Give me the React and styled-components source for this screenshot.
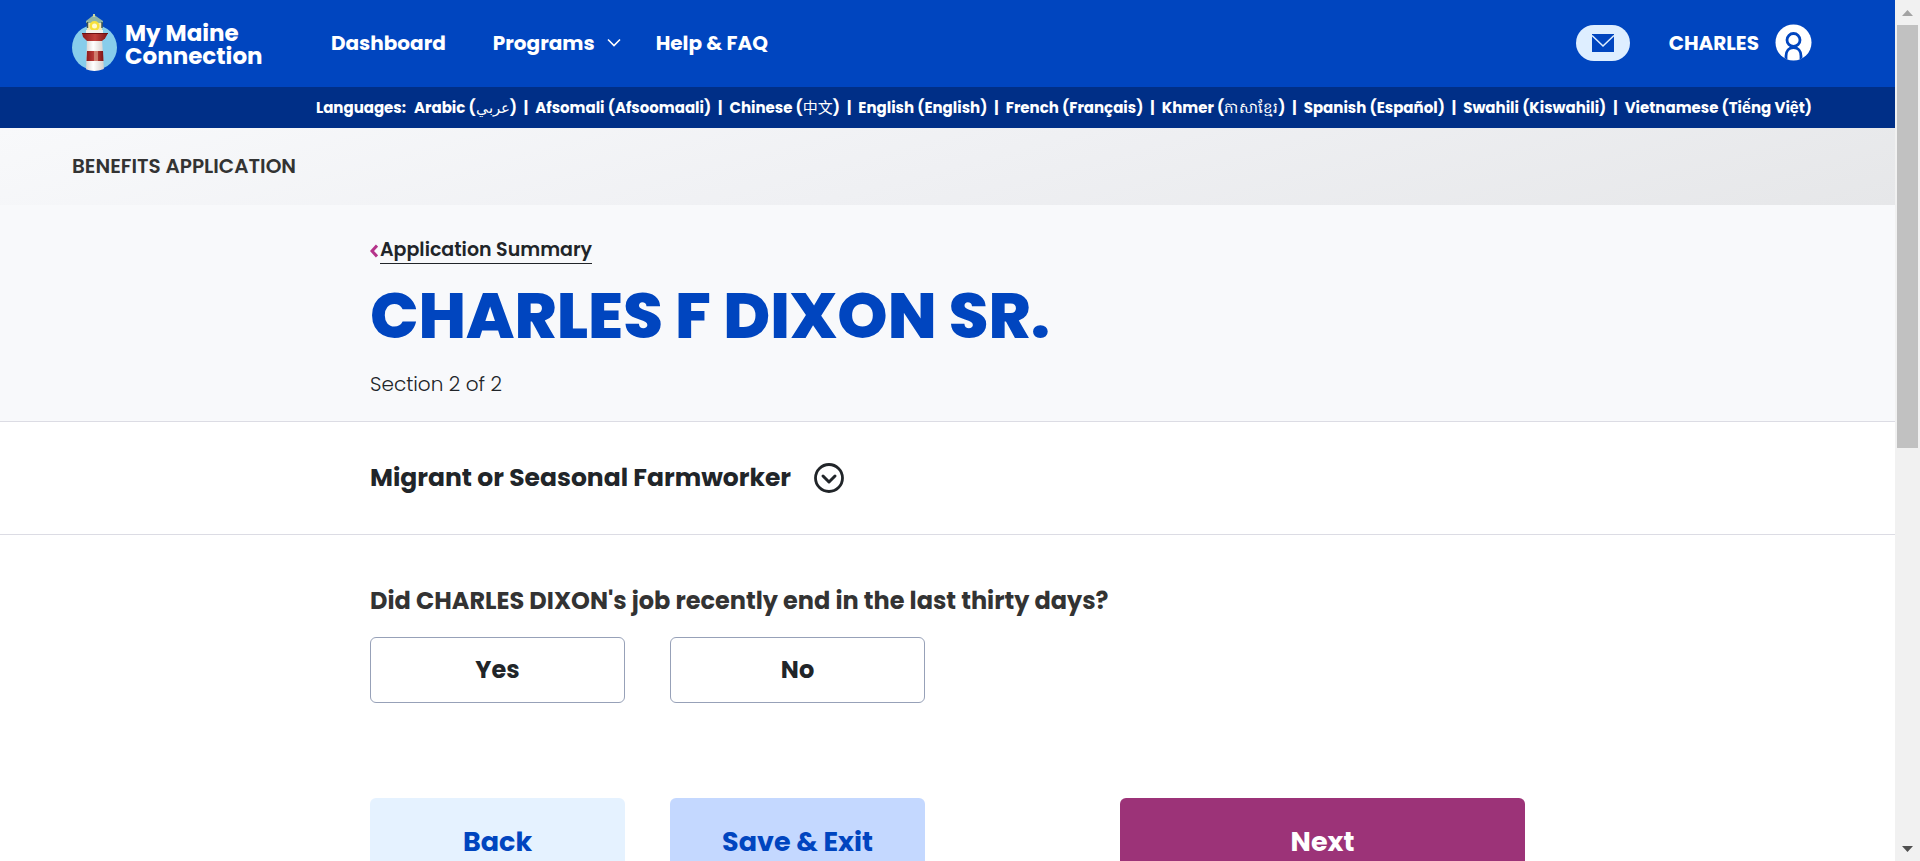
import React, { useState } from "react";
import styled, { createGlobalStyle } from "styled-components";

const GlobalStyle = createGlobalStyle`
  *, *::before, *::after { box-sizing: border-box; }
  html, body { margin: 0; padding: 0; }
  body {
    font-family: Poppins, Inter, "Noto Sans CJK SC", "Noto Sans", sans-serif;
    color: #212529;
    background: #fff;
  }
  button { font-family: inherit; cursor: pointer; }
  h1, h2, h3, p, ul, fieldset { margin: 0; padding: 0; }
`;

const Screen = styled.div`
  display: grid;
  grid-template-columns: minmax(0, 1fr) 25px;
  height: 100vh;
  overflow: hidden;
`;

const Page = styled.div`
  overflow: hidden;
`;

const Header = styled.header`
  display: flex;
  align-items: center;
  height: 87px;
  padding: 0 83px 2px 72px;
  background: #0045bf;
  color: #fff;
`;

const Brand = styled.a`
  display: flex;
  align-items: flex-start;
  gap: 8px;
  width: 259px;
  color: inherit;
  text-decoration: none;
`;

const BrandName = styled.span`
  padding-top: 8px;
  font-size: 23px;
  font-weight: 700;
  line-height: 23px;
`;

const Nav = styled.nav`
  display: flex;
  align-items: center;
  gap: 47px;
  flex: 1;
`;

const navText = `
  display: flex;
  align-items: center;
  padding: 0;
  border: 0;
  background: none;
  color: inherit;
  font-size: 20px;
  font-weight: 700;
  line-height: 28px;
  text-decoration: none;
`;
const NavLink = styled.a`${navText}`;
const NavButton = styled.button`
  ${navText}
  gap: 12px;
  margin-right: -12px;
`;

const MailButton = styled.button`
  display: flex;
  align-items: center;
  justify-content: center;
  width: 54px;
  height: 36px;
  margin-right: 39px;
  padding: 0;
  border: 0;
  border-radius: 18px;
  background: #deeeff;
`;

const Account = styled.button`
  ${navText}
  gap: 16px;
`;

const LanguageBar = styled.div`
  display: flex;
  align-items: center;
  justify-content: flex-end;
  gap: 8px;
  height: 41px;
  padding: 0 83px 0 72px;
  background: #002f87;
  color: #fff;
  font-size: 15px;
  font-weight: 700;
  line-height: 24px;
  white-space: nowrap;
`;

const LanguageList = styled.ul`
  display: flex;
  list-style: none;
`;

const LanguageItem = styled.li`
  & + &::before {
    content: "|";
    padding: 0 7px;
  }
`;

const LanguageLink = styled.a`
  color: inherit;
  text-decoration: none;
`;

const NativeName = styled.span`
  font-weight: ${(p) => (p.$thin ? 400 : 700)};
`;

const AppBar = styled.div`
  display: flex;
  align-items: center;
  height: 77px;
  padding: 0 72px 2px;
  background: linear-gradient(165deg, #f8f9fb 0%, #eff0f3 50%, #e6e7e9 100%);
  color: #333;
  font-size: 20px;
  font-weight: 600;
  line-height: 28px;
`;

const Band = styled.section`
  padding: ${(p) => p.$pad};
  background: ${(p) => (p.$tint ? "#f8f9fb" : "#fff")};
  border-bottom: ${(p) => (p.$line ? "1px solid #dcdce4" : "0")};
`;

const Container = styled.div`
  width: calc(100% - 48px);
  max-width: 1155px;
  margin: 0 auto;
`;

const BackLink = styled.a`
  display: inline-flex;
  align-items: center;
  gap: 2px;
  color: #212529;
  font-size: 19px;
  font-weight: 600;
  line-height: 28px;
  text-decoration: none;
  span { border-bottom: 1px solid #212529; line-height: 26px; }
`;

const Title = styled.h1`
  margin-top: 12px;
  color: #0045bf;
  font-size: 64px;
  font-weight: 800;
  line-height: 77px;
`;

const Progress = styled.p`
  margin-top: 16px;
  font-size: 20px;
  font-weight: 300;
  line-height: 28px;
`;

const SectionRow = styled.div`
  display: flex;
  align-items: center;
  gap: 23px;
`;

const SectionTitle = styled.h2`
  font-size: 25px;
  font-weight: 700;
  line-height: 32px;
`;

const ToggleButton = styled.button`
  display: flex;
  padding: 0;
  border: 0;
  background: none;
  color: #212529;
`;

const Question = styled.fieldset`
  border: 0;
`;

const Legend = styled.legend`
  margin-bottom: 20px;
  padding: 0;
  color: #333;
  font-size: 24px;
  font-weight: 700;
  line-height: 32px;
`;

const ButtonRow = styled.div`
  display: flex;
  gap: 45px;
`;

const Choice = styled.button`
  width: 255px;
  height: 66px;
  border: 1px solid #97a1b8;
  border-radius: 6px;
  background: ${(p) => (p.$on ? "#deeeff" : "#fff")};
  color: #212529;
  font-size: 24px;
  font-weight: 700;
`;

const actionLook = {
  back: { bg: "#e5f2ff", fg: "#0045bf", w: "255px" },
  save: { bg: "#c4d8ff", fg: "#0045bf", w: "255px" },
  next: { bg: "#9c3378", fg: "#fff", w: "405px" },
};
const Action = styled.button`
  width: ${(p) => actionLook[p.$kind].w};
  height: 88px;
  margin-left: ${(p) => (p.$kind === "next" ? "auto" : "0")};
  border: 0;
  border-radius: 6px;
  background: ${(p) => actionLook[p.$kind].bg};
  color: ${(p) => actionLook[p.$kind].fg};
  font-size: 27px;
  font-weight: 700;
`;

const Actions = styled(ButtonRow)`
  margin-top: 95px;
`;

const ScrollBar = styled.div`
  display: flex;
  flex-direction: column;
  justify-content: space-between;
  align-items: center;
  background: #f1f1f1;
`;

const ScrollTop = styled.div`
  display: flex;
  flex-direction: column;
  align-items: center;
  height: 52%;
`;

const ScrollArrow = styled.div`
  display: flex;
  align-items: center;
  justify-content: center;
  width: 25px;
  height: 25px;
  flex: none;
`;

const ScrollThumb = styled.div`
  flex: 1;
  width: 21px;
  background: #c1c1c1;
`;

function Lighthouse() {
  return (
    <svg width="45" height="57" viewBox="0 0 45 57" aria-hidden="true">
      <defs>
        <clipPath id="disc"><path d="M0 0H45V35A22.500 22 0 0 1 0 35Z" /></clipPath>
        <linearGradient id="tower">
          <stop offset="0" stopColor="#d8d4d0" /><stop offset=".4" stopColor="#fff" /><stop offset="1" stopColor="#d5cfca" />
        </linearGradient>
        <linearGradient id="red">
          <stop offset="0" stopColor="#8d1a1c" /><stop offset=".5" stopColor="#c2413c" /><stop offset="1" stopColor="#7d1416" />
        </linearGradient>
      </defs>
      <circle cx="22.500" cy="33.500" r="22.500" fill="#87cdeb" />
      <g clipPath="url(#disc)">
        <path d="M15 25H30L32 57H14Z" fill="url(#tower)" />
        <path d="M15 37H31L31.500 47H14.500Z" fill="url(#red)" />
        <path d="M22 37H26V47H22Z" fill="#d99a84" opacity=".7" />
      </g>
      <path d="M15 7H30V21H15Z" fill="#f3e9b8" />
      <path d="M14 7L21 1.500H23L31 7V9H14Z" fill="#8fb6a6" />
      <path d="M22 0V3" stroke="#c9d6a0" strokeWidth="2" />
      <path d="M15.500 8V14M30 8V14" stroke="#3f5553" strokeWidth="1.500" />
      <circle cx="22.500" cy="12" r="5" fill="#f7e13b" />
      <circle cx="22.500" cy="12" r="2.500" fill="#fffbd0" />
      <path d="M14 16H31V20H14Z" fill="#f4f1ec" />
      <path d="M10 19H36L33 24.500L30 27H15L11 23Z" fill="url(#red)" />
      <path d="M10 19.500H36" stroke="#6d1012" strokeWidth="1" />
    </svg>
  );
}

function MailIcon() {
  return (
    <svg width="22" height="18" viewBox="0 0 22 18" aria-hidden="true">
      <path d="M0 0H22V18H0Z" fill="#0045bf" />
      <path d="M0 1.500L11 12L22 1.500" fill="none" stroke="#deeeff" strokeWidth="1.600" />
    </svg>
  );
}

function Avatar() {
  return (
    <svg width="37" height="37" viewBox="0 0 37 37" aria-hidden="true">
      <defs><clipPath id="face"><circle cx="18.500" cy="18.500" r="18" /></clipPath></defs>
      <circle cx="18.500" cy="18.500" r="18" fill="#fff" />
      <g clipPath="url(#face)" fill="none" stroke="#0045bf" strokeWidth="2.800">
        <circle cx="18.500" cy="16" r="6.500" />
        <path d="M11 37V32C11 27 14 23.500 18.500 23.500S26 27 26 32V37" />
      </g>
    </svg>
  );
}

const languages = [
  ["Arabic", "عربي", true],
  ["Afsomali", "Afsoomaali"],
  ["Chinese", "中文", true],
  ["English", "English"],
  ["French", "Français"],
  ["Khmer", "ភាសាខ្មែរ", true],
  ["Spanish", "Español"],
  ["Swahili", "Kiswahili"],
  ["Vietnamese", "Tiếng Việt"],
];

export default function App() {
  const [answer, setAnswer] = useState(null);
  return (
    <>
      <GlobalStyle />
      <Screen>
        <Page>
          <Header>
            <Brand href="#home">
              <Lighthouse />
              <BrandName>My Maine<br />Connection</BrandName>
            </Brand>
            <Nav>
              <NavLink href="#dashboard">Dashboard</NavLink>
              <NavButton type="button">
                Programs
                <svg width="14" height="9" viewBox="0 0 14 9" aria-hidden="true">
                  <path d="M1 1.500L7 7.500L13 1.500" fill="none" stroke="#fff" strokeWidth="1.600" />
                </svg>
              </NavButton>
              <NavLink href="#help">Help &amp; FAQ</NavLink>
            </Nav>
            <MailButton type="button" aria-label="Messages"><MailIcon /></MailButton>
            <Account type="button">CHARLES<Avatar /></Account>
          </Header>
          <LanguageBar>
            <span>Languages:</span>
            <LanguageList>
              {languages.map(([name, native, thin]) => (
                <LanguageItem key={name}>
                  <LanguageLink href={"#" + name}>
                    {name} (<NativeName $thin={thin}>{native}</NativeName>)
                  </LanguageLink>
                </LanguageItem>
              ))}
            </LanguageList>
          </LanguageBar>
          <AppBar>BENEFITS APPLICATION</AppBar>
          <main>
            <Band $tint $line $pad="32px 0 23px">
              <Container>
                <BackLink href="#summary">
                  <svg width="8" height="14" viewBox="0 0 8 14" aria-hidden="true">
                    <path d="M7 1.500L2 7L7 12.500" fill="none" stroke="#b5338a" strokeWidth="3" />
                  </svg>
                  <span>Application Summary</span>
                </BackLink>
                <Title>CHARLES F DIXON SR.</Title>
                <Progress>Section 2 of 2</Progress>
              </Container>
            </Band>
            <Band $line $pad="40px 0">
              <Container>
                <SectionRow>
                  <SectionTitle>Migrant or Seasonal Farmworker</SectionTitle>
                  <ToggleButton type="button" aria-label="Show section details">
                    <svg width="30" height="30" viewBox="0 0 30 30" fill="none" stroke="currentColor" aria-hidden="true">
                      <circle cx="15" cy="15" r="13.500" strokeWidth="2.800" />
                      <path d="M9 13L15 19L21 13" strokeWidth="3" strokeLinecap="round" strokeLinejoin="round" />
                    </svg>
                  </ToggleButton>
                </SectionRow>
              </Container>
            </Band>
            <Band $pad="50px 0">
              <Container>
                <Question>
                  <Legend>Did CHARLES DIXON's job recently end in the last thirty days?</Legend>
                  <ButtonRow>
                    {["Yes", "No"].map((label) => (
                      <Choice
                        key={label}
                        type="button"
                        aria-pressed={answer === label}
                        $on={answer === label}
                        onClick={() => setAnswer(label)}
                      >
                        {label}
                      </Choice>
                    ))}
                  </ButtonRow>
                </Question>
                <Actions>
                  <Action type="button" $kind="back">Back</Action>
                  <Action type="button" $kind="save">Save &amp; Exit</Action>
                  <Action type="button" $kind="next">Next</Action>
                </Actions>
              </Container>
            </Band>
          </main>
        </Page>
        <ScrollBar aria-hidden="true">
          <ScrollTop>
            <ScrollArrow>
              <svg width="11" height="6" viewBox="0 0 11 6"><path d="M0 6L5.500 0L11 6Z" fill="#a3a3a3" /></svg>
            </ScrollArrow>
            <ScrollThumb />
          </ScrollTop>
          <ScrollArrow>
            <svg width="11" height="6" viewBox="0 0 11 6"><path d="M0 0L5.500 6L11 0Z" fill="#505050" /></svg>
          </ScrollArrow>
        </ScrollBar>
      </Screen>
    </>
  );
}
